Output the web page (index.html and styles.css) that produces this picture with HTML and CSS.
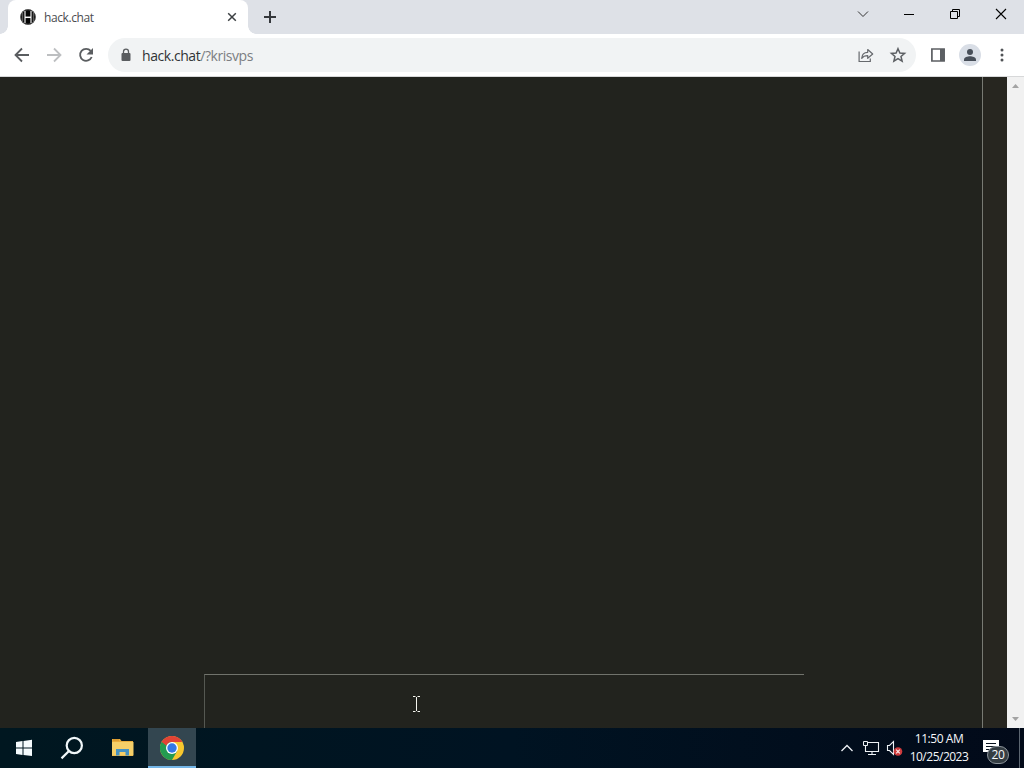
FILE: index.html
```
<!DOCTYPE html>
<html lang="en">
<head>
<meta charset="utf-8">
<title>hack.chat</title>
<link rel="stylesheet" href="styles.css">
</head>
<body>
<div class="desktop">
  <header class="titlebar">
    <div class="tab">
      <svg class="favicon" width="16" height="16" viewBox="0 0 16 16"><circle cx="8" cy="8" r="7.7" fill="#050505"/><circle cx="8" cy="8" r="7.3" fill="none" stroke="#666" stroke-width=".8"/><path d="M5 2v12M11 2v12" stroke="#fff" stroke-width="1.1"/><path d="M5 8.300h6" stroke="#fff" stroke-width="1.5"/><path d="M2.700 3.500v9M13.300 3.500v9" stroke="#888" stroke-width=".8"/></svg>
      <span class="tab-title">hack.chat</span>
      <svg class="tab-close" width="16" height="16" viewBox="0 0 16 16"><path d="M4.2 4.2l7.6 7.6M11.8 4.2l-7.6 7.6" stroke="#3c4043" stroke-width="1.5"/></svg>
    </div>
    <svg class="new-tab" width="16" height="16" viewBox="0 0 16 16"><path d="M8 2v12M2 8h12" stroke="#35383c" stroke-width="2"/></svg>
    <div class="window-controls">
      <svg width="46" height="28" viewBox="0 0 46 28"><path d="M18 11.5l5 5 5-5" fill="none" stroke="#333" stroke-width="1"/></svg>
      <svg width="46" height="28" viewBox="0 0 46 28"><path d="M18 14.5h10" stroke="#000"/></svg>
      <svg width="46" height="28" viewBox="0 0 46 28"><path d="M18.500 11.500h7v7h-7zM20.500 11.500v-2h7v7h-2" fill="none" stroke="#000"/></svg>
      <svg width="46" height="28" viewBox="0 0 46 28"><path d="M18 9l10 10M28 9l-10 10" stroke="#000" stroke-width="1.1"/></svg>
    </div>
  </header>
  <nav class="toolbar">
    <svg class="nav-icon" width="32" height="32" viewBox="0 0 32 32"><path d="M23 16H10M16 9.500L9.500 16l6.500 6.500" fill="none" stroke="#5a5d60" stroke-width="1.8"/></svg>
    <svg class="nav-icon" width="32" height="32" viewBox="0 0 32 32"><path d="M9 16h13M16 9.500l6.500 6.500-6.500 6.500" fill="none" stroke="#bdbfc1" stroke-width="1.8"/></svg>
    <svg class="nav-icon" width="32" height="32" viewBox="0 0 32 32"><path d="M20.700 11.900A6 6 0 1 0 21.700 18" fill="none" stroke="#5a5d60" stroke-width="1.8"/><path d="M23 9v6.500h-6.500z" fill="#5a5d60"/></svg>
    <div class="address">
      <svg class="lock" width="12" height="14" viewBox="0 0 12 14"><rect x="1.500" y="5" width="9" height="8" rx="1" fill="#5a5d60"/><path d="M3.500 6V3.700a2.500 2.500 0 0 1 5 0V6" fill="none" stroke="#5a5d60" stroke-width="1.300"/></svg>
      <span class="url"><span class="host">hack.chat</span>/?krisvps</span>
      <svg class="share" width="18" height="18" viewBox="0 0 18 18"><path d="M2.100 5.500v10h11.200v-3" fill="none" stroke="#66696d" stroke-width="1.200"/><path d="M4.700 12.300c.3-4 2.600-6 6-6V3.500L15.700 8 10.700 12.300V9.600c-2.500 0-4.600.7-6 2.700z" fill="none" stroke="#66696d" stroke-width="1.200" stroke-linejoin="round"/></svg>
      <svg class="star" width="18" height="18" viewBox="0 0 18 18"><path d="M9 2.700l1.900 4.300 4.700.4-3.600 3.100 1.100 4.600L9 12.600l-4.100 2.500L6 10.500 2.400 7.400 7.100 7z" fill="none" stroke="#5c5f63" stroke-width="1.500"/></svg>
    </div>
    <svg class="side-panel" width="14" height="14" viewBox="0 0 14 14"><path d="M.9 1h12.200v12H.9z" fill="none" stroke="#5c5f63" stroke-width="1.700"/><path d="M9 1h4.500v12H9z" fill="#5c5f63"/></svg>
    <svg class="profile" width="22" height="22" viewBox="0 0 22 22"><circle cx="11" cy="11" r="11" fill="#d9dee6"/><circle cx="11" cy="7.900" r="3" fill="#474e58"/><path d="M5 17v-1.500c0-2.200 3.600-3.300 6-3.300s6 1.100 6 3.300V17z" fill="#474e58"/></svg>
    <svg class="menu" width="4" height="14" viewBox="0 0 4 14"><circle cx="2" cy="2" r="1.500" fill="#505356"/><circle cx="2" cy="7" r="1.500" fill="#505356"/><circle cx="2" cy="12" r="1.500" fill="#505356"/></svg>
  </nav>
  <main class="page">
    <section class="chat"><div class="message-box"></div></section>
    <aside class="sidebar"></aside>
    <div class="scrollbar">
      <svg width="17" height="17" viewBox="0 0 17 17"><path d="M5 11l3.500-4 3.500 4z" fill="#a3a3a3"/></svg>
      <svg width="17" height="17" viewBox="0 0 17 17"><path d="M5 6l3.500 4L12 6z" fill="#a3a3a3"/></svg>
    </div>
    <svg class="cursor" width="9" height="16" viewBox="0 0 9 16"><path d="M1 .5h2.500M5.500 .5H8M4.500 1v14M1 15.500h2.500M5.500 15.500H8" stroke="#f4f4ee"/></svg>
  </main>
  <footer class="taskbar">
    <div class="launchers">
      <svg width="48" height="40" viewBox="0 0 48 40"><path d="M16 14l6.500-.9v6.300H16zM23.500 13l8.500-1.200v7.600h-8.500zM16 20.500h6.500v6.400L16 26zM23.500 20.500H32V28l-8.500-1.100z" fill="#f5fbfd"/></svg>
      <svg width="48" height="40" viewBox="0 0 48 40"><circle cx="26.300" cy="17.500" r="7.600" fill="none" stroke="#f0f7f9" stroke-width="2.200"/><path d="M20.700 23.200l-7.200 7.200" stroke="#f0f7f9" stroke-width="2.200"/></svg>
      <svg class="explorer" width="48" height="40" viewBox="0 0 48 40"><path d="M16 11h8l1.500 2H37v15H16z" fill="#e9ad3d"/><path d="M16 14h21.500v13.500H16z" fill="#f5cf68"/><path d="M17 12h6" stroke="#d18b24"/><path d="M20 21h13v6.500h-3.500V24h-6v3.500H20z" fill="#4592c2"/></svg>
      <div class="active-app"><svg width="24" height="24" viewBox="0 0 24 24"><circle cx="12" cy="12" r="12" fill="#f8c72e"/><path d="M1.600 6a12 12 0 0 0 10.400 18L17.200 15 12 12 12 6z" fill="#239b50"/><path d="M1.600 6A12 12 0 0 1 22.400 6H12a6 6 0 0 0-5.700 4z" fill="#e24335"/><path d="M6.800 15L1.600 6 8 11z" fill="#239b50"/><circle cx="12" cy="12" r="6" fill="#fff"/><circle cx="12" cy="12" r="4.700" fill="#3478e5"/></svg></div>
    </div>
    <div class="tray">
      <svg width="24" height="40" viewBox="0 0 24 40"><path d="M6.500 23l5.500-5.500 5.500 5.500" fill="none" stroke="#edf1f5" stroke-width="1.300"/></svg>
      <svg width="24" height="40" viewBox="0 0 24 40"><path d="M8 14.500h11.500v9H6.500V18M13 24v3M9 26.500h8" fill="none" stroke="#edf1f5" stroke-width="1.100"/><path d="M4.500 13.500h4v4h-4z" fill="#071421" stroke="#edf1f5"/></svg>
      <svg width="24" height="40" viewBox="0 0 24 40"><path d="M4.500 17.500h2l4-4v13l-4-4h-2z" fill="none" stroke="#edf1f5" stroke-width="1.100"/><circle cx="15" cy="23.500" r="4.300" fill="#cf3b3d"/><path d="M13.200 21.700l3.600 3.600M16.800 21.700l-3.600 3.600" stroke="#ffe9e7" stroke-width="1.200"/></svg>
      <div class="clock"><span class="time">11:50 AM</span><span class="date">10/25/2023</span></div>
      <div class="notifications">
        <svg width="17" height="17" viewBox="0 0 17 17"><path d="M0 0h16v12H9l-4 4v-4H0z" fill="#fff"/><path d="M3 3.500h10M3 6.500h10M3 9.500h6" stroke="#09131f"/></svg>
        <span class="badge">20</span>
      </div>
      <div class="show-desktop"></div>
    </div>
  </footer>
</div>
</body>
</html>
```
FILE: styles.css
```
* { box-sizing: border-box; }
body { margin: 0; overflow: hidden; font-family: "Open Sans", "Noto Sans", sans-serif; }
svg { display: block; flex: none; }
.desktop { width: 1024px; height: 768px; display: flex; flex-direction: column; background: #22231e; }
.titlebar { height: 34px; display: flex; background: #dee1e7; flex: none; }
.tab { width: 240px; height: 34px; margin-left: 8px; background: #fff; border-radius: 8px 8px 0 0; display: flex; align-items: center; padding: 0 8px 0 12px; position: relative; }
.tab::before, .tab::after { content: ""; position: absolute; bottom: 0; width: 8px; height: 8px; }
.tab::before { left: -8px; background: radial-gradient(circle at 0 0, #dee1e7 7.5px, #fff 8px); }
.tab::after { right: -8px; background: radial-gradient(circle at 100% 0, #dee1e7 7.5px, #fff 8px); }
.tab-title { margin-left: 8px; padding-top: 1px; font-size: 12px; line-height: 16px; letter-spacing: -.4px; color: #4a4d50; }
.tab-close { margin-left: auto; }
.new-tab { margin: 9px 0 0 14px; }
.window-controls { display: flex; margin-left: auto; }
.toolbar { height: 43px; background: #fff; border-bottom: 1px solid #d7d8d9; display: flex; align-items: center; padding-left: 6px; flex: none; }
.address { width: 808px; height: 34px; margin-left: 6px; border-radius: 17px; background: #f1f3f4; display: flex; align-items: center; padding: 0 9px 0 12px; }
.url { margin-left: 10px; padding-top: 1px; font-size: 14px; line-height: 20px; letter-spacing: -.44px; color: #7b7e82; white-space: nowrap; }
.host { color: #303336; }
.share { margin-left: auto; }
.star { margin-left: 14px; }
.side-panel { margin-left: 15px; }
.profile { margin-left: 14px; }
.menu { margin-left: 19px; }
.page { height: 651px; display: flex; position: relative; flex: none; background: #22231e; }
.chat { width: 982px; display: flex; flex-direction: column; justify-content: flex-end; align-items: flex-start; }
.message-box { width: 600px; height: 54px; margin-left: 204px; border-top: 1px solid #71736c; border-left: 1px solid #555852; }
.sidebar { width: 25px; border-left: 1px solid #787a73; background: #272620; }
.scrollbar { width: 17px; background: #f1f1f1; display: flex; flex-direction: column; justify-content: space-between; }
.cursor { position: absolute; left: 412px; top: 619px; }
.taskbar { height: 40px; display: flex; justify-content: space-between; background: linear-gradient(90deg, #001720, #001322 50%, #020a19); }
.launchers { display: flex; }
.explorer { margin-right: 4px; }
.active-app { width: 48px; height: 40px; display: flex; align-items: center; justify-content: center; background: #334650; border-bottom: 2px solid #74b6e8; padding-top: 2px; }
.tray { display: flex; color: #f5f7fa; }
.clock { width: 64px; height: 40px; display: flex; flex-direction: column; align-items: center; padding-top: 2px; font-size: 12px; line-height: 18px; white-space: nowrap; }
.time { letter-spacing: -.45px; }
.date { letter-spacing: -.5px; }
.notifications { width: 48px; padding: 12px 0 0 12px; position: relative; }
.badge { position: absolute; left: 16px; top: 18px; width: 22px; height: 18px; border: 1px solid #8b939a; border-radius: 9px; background: #343d43; font-size: 12px; line-height: 16px; letter-spacing: -.3px; text-align: center; }
.show-desktop { width: 5px; border-left: 1px solid #5c6671; }
```
